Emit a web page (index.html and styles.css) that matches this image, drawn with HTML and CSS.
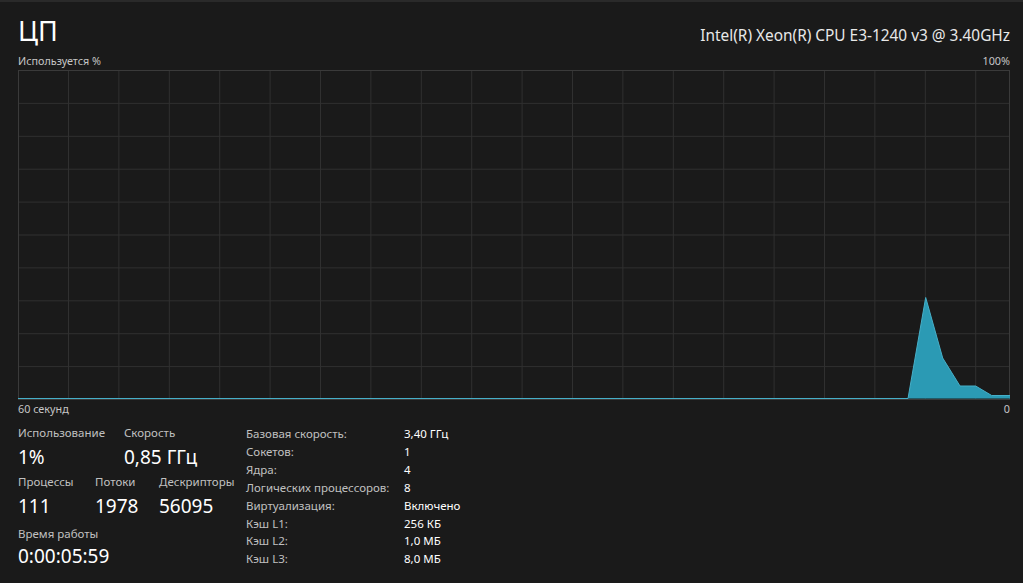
FILE: index.html
```html
<!DOCTYPE html>
<html lang="ru">
<head>
<meta charset="utf-8">
<title>ЦП</title>
<link rel="stylesheet" href="styles.css">
</head>
<body>
<div class="page">
  <header class="head">
    <h1 class="title">ЦП</h1>
    <div class="model">Intel(R) Xeon(R) CPU E3-1240 v3 @ 3.40GHz</div>
  </header>
  <div class="axis axis-top"><span>Используется %</span><span>100%</span></div>
  <div class="graph">
    <svg class="chart" width="992" height="330" viewBox="0 0 992 330" preserveAspectRatio="none">
      <g class="grid">
        <path d="M0 33.4H992M0 66.3H992M0 99.2H992M0 132.1H992M0 165H992M0 197.9H992M0 230.8H992M0 263.7H992M0 296.6H992"/>
        <path d="M50.5 0V330M100.9 0V330M151.3 0V330M201.7 0V330M252.1 0V330M302.5 0V330M352.9 0V330M403.3 0V330M453.7 0V330M504.1 0V330M554.5 0V330M604.9 0V330M655.3 0V330M705.7 0V330M756.1 0V330M806.5 0V330M856.9 0V330M907.3 0V330M957.7 0V330"/>
      </g>
      <rect class="frame" x="0.5" y="0.5" width="991" height="329"/>
      <polygon class="area" points="890,328.5 907.7,227.5 924.7,288 942,316 957.7,316 973.7,325.5 992,325.5 992,328.5"/>
      <polyline class="line" points="0,328.5 890,328.5 907.7,227.5 924.7,288 942,316 957.7,316 973.7,325.5 992,325.5"/>
    </svg>
  </div>
  <div class="axis axis-bottom"><span>60 секунд</span><span>0</span></div>

  <section class="stats">
    <div class="dyn">
      <div class="row row1">
        <div class="stat w-usage"><div class="lbl">Использование</div><div class="val">1%</div></div>
        <div class="stat"><div class="lbl">Скорость</div><div class="val">0,85 ГГц</div></div>
      </div>
      <div class="row row2">
        <div class="stat w-proc"><div class="lbl">Процессы</div><div class="val">111</div></div>
        <div class="stat w-thr"><div class="lbl">Потоки</div><div class="val">1978</div></div>
        <div class="stat"><div class="lbl">Дескрипторы</div><div class="val">56095</div></div>
      </div>
      <div class="row row3">
        <div class="stat"><div class="lbl">Время работы</div><div class="val">0:00:05:59</div></div>
      </div>
    </div>
    <dl class="info">
      <dt>Базовая скорость:</dt><dd>3,40 ГГц</dd>
      <dt>Сокетов:</dt><dd>1</dd>
      <dt>Ядра:</dt><dd>4</dd>
      <dt>Логических процессоров:</dt><dd>8</dd>
      <dt>Виртуализация:</dt><dd>Включено</dd>
      <dt>Кэш L1:</dt><dd>256 КБ</dd>
      <dt>Кэш L2:</dt><dd>1,0 МБ</dd>
      <dt>Кэш L3:</dt><dd>8,0 МБ</dd>
    </dl>
  </section>
</div>
</body>
</html>
```
FILE: styles.css
```css
* { box-sizing: border-box; }
html, body {
  margin: 0;
  padding: 0;
  background: #1a1a1a;
  height: 100%;
}
body {
  font-family: "Noto Sans", "Open Sans", sans-serif;
  color: #fff;
  overflow: hidden;
}
.page {
  border-top: 2px solid #2a2a2a;
  padding: 12px 13px 0 18px;
  height: 583px;
}
.head {
  display: flex;
  justify-content: space-between;
  align-items: baseline;
  height: 34px;
}
.title {
  margin: 0;
  font-weight: 400;
  font-size: 27px;
  line-height: 34px;
  color: #fff;
}
.model {
  font-size: 15.4px;
  color: #e8e8e8;
}
.axis {
  display: flex;
  justify-content: space-between;
  font-size: 10.8px;
  line-height: 14px;
  color: #c6c6c6;
}
.axis-top { margin-top: 6px; margin-bottom: 2px; }
.axis-bottom { margin-top: 2px; }
.graph { height: 330px; }
.chart { display: block; }
.grid path { stroke: #303030; stroke-width: 1; fill: none; }
.frame { fill: none; stroke: #3a3a3a; stroke-width: 1; }
.area { fill: #2b9ab4; stroke: none; }
.line { fill: none; stroke: #46afc8; stroke-width: 1; }

.stats {
  display: flex;
  margin-top: 9px;
}
.dyn { width: 228px; }
.row { display: flex; }
.row2 { margin-top: 6px; }
.row3 { margin-top: 9px; }
.w-usage { width: 106px; }
.w-proc { width: 77px; }
.w-thr { width: 64px; }
.lbl {
  font-size: 11.5px;
  line-height: 16px;
  color: #c0c0c0;
}
.val {
  font-size: 19px;
  line-height: 22px;
  margin-top: 5px;
  color: #fff;
}
.row3 .val { margin-top: 3px; }
.info {
  margin: 0;
  display: grid;
  grid-template-columns: 158px auto;
  font-size: 11.5px;
  line-height: 17.9px;
}
.info dt { color: #c0c0c0; }
.info dd { margin: 0; color: #fff; }
```
